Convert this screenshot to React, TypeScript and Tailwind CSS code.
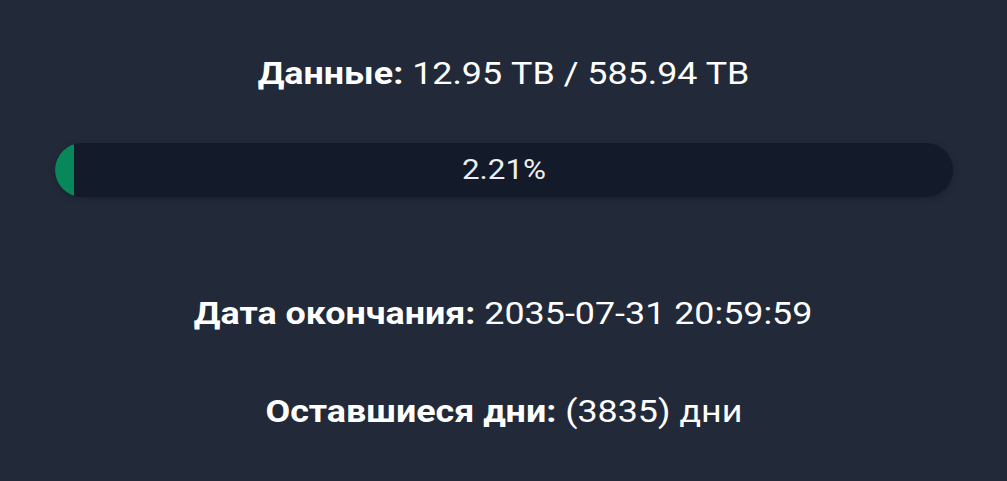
export default function App() {
  const used = 12.95;
  const total = 585.94;
  const pct = (used / total) * 100;

  return (
    <div className="w-[1007px] h-[481px] bg-[#222a3a] text-white font-['Roboto',sans-serif] flex flex-col items-center">
      <p className="mt-[50px] text-[32px] leading-[46px] scale-x-[1.12]">
        <span className="font-bold">Данные:</span> {used.toFixed(2)} TB / {total.toFixed(2)} TB
      </p>

      <div className="mt-[47px] w-[898px] h-[54px] rounded-full bg-[#131a29] overflow-hidden relative shadow-[0_2px_6px_rgba(0,0,0,0.25)]">
        <div className="h-full bg-[#07875a]" style={{ width: `${pct}%` }} />
        <span className="absolute inset-0 flex items-center justify-center text-[28px] text-[#eceef2] scale-x-[1.12]">
          {pct.toFixed(2)}%
        </span>
      </div>

      <p className="mt-[93px] text-[32px] leading-[46px] scale-x-[1.12]">
        <span className="font-bold">Дата окончания:</span> 2035-07-31 20:59:59
      </p>

      <p className="mt-[52px] text-[32px] leading-[46px] scale-x-[1.12]">
        <span className="font-bold">Оставшиеся дни:</span> (3835) дни
      </p>
    </div>
  );
}
